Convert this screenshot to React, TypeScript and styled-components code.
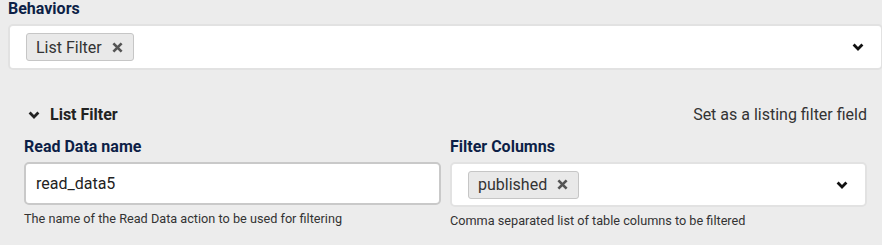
import React from 'react'
import styled, { createGlobalStyle } from 'styled-components'

const GlobalStyle = createGlobalStyle`
  html, body {
    margin: 0;
    padding: 0;
    background: #ececec;
    overflow: hidden;
  }
  body {
    font-family: Roboto, "Liberation Sans", Arial, sans-serif;
  }
`

const Page = styled.div`
  width: 891px;
  box-sizing: border-box;
  padding: 0 8px;
  margin-top: -1px;
`

const GroupLabel = styled.div`
  font-size: 16px;
  font-weight: 700;
  line-height: 19px;
  color: #0d1f47;
`

const SelectBox = styled.div<{ $mt?: number; $h: number }>`
  box-sizing: border-box;
  height: ${p => p.$h}px;
  margin-top: ${p => p.$mt ?? 0}px;
  background: #fff;
  border: 2px solid #e2e2e2;
  border-radius: 5px;
  display: flex;
  align-items: center;
  padding: 0 17px 0 16px;
`

const Tags = styled.div`
  flex: 1;
  display: flex;
  gap: 6px;
`

const Tag = styled.span`
  box-sizing: border-box;
  height: 28px;
  display: inline-flex;
  align-items: center;
  gap: 10px;
  padding: 0 10px 0 9px;
  background: #e9e9e9;
  border: 1px solid #c6c6c6;
  border-radius: 3px;
  font-size: 16px;
  color: #333;
`

const Section = styled.div`
  padding: 35px 16px 0 16px;
`

const SectionHead = styled.div`
  display: flex;
  justify-content: space-between;
  align-items: center;
  line-height: 19px;
  font-size: 16px;
`

const SectionTitle = styled.div`
  display: flex;
  align-items: center;
  gap: 10px;
  padding-left: 4px;
  font-weight: 700;
  color: #222;
`

const SectionNote = styled.div`
  color: #333;
`

const Columns = styled.div`
  display: grid;
  grid-template-columns: 1fr 1fr;
  column-gap: 9px;
  margin-top: 13px;
`

const Field = styled.div`
  display: flex;
  flex-direction: column;
`

const FieldLabel = styled(GroupLabel)`
  margin-bottom: 6px;
`

const TextInput = styled.div`
  box-sizing: border-box;
  height: 43px;
  background: #fff;
  border: 2px solid #c9c9c9;
  border-radius: 5px;
  display: flex;
  align-items: center;
  padding: 0 10px;
  font-size: 16px;
  color: #222;
`

const Help = styled.div`
  margin-top: 7px;
  font-size: 12.7px;
  line-height: 14px;
  color: #333;
`

const Chevron = ({ color = '#111' }: { color?: string }) => (
  <svg width="12" height="8" viewBox="0 0 12 8">
    <path d="M1.6 1.6 L6 6 L10.4 1.6" fill="none" stroke={color} strokeWidth="2.8" />
  </svg>
)

const Cross = () => (
  <svg width="11" height="11" viewBox="0 0 11 11">
    <path d="M1.4 1.4 L9.6 9.6 M9.6 1.4 L1.4 9.6" stroke="#555" strokeWidth="2.7" />
  </svg>
)

const App: React.FC = () => (
  <>
    <GlobalStyle />
    <Page>
      <GroupLabel>Behaviors</GroupLabel>
      <SelectBox $mt={6} $h={46}>
        <Tags>
          <Tag>
            List Filter <Cross />
          </Tag>
        </Tags>
        <Chevron />
      </SelectBox>
      <Section>
        <SectionHead>
          <SectionTitle>
            <Chevron color="#222" />
            List Filter
          </SectionTitle>
          <SectionNote>Set as a listing filter field</SectionNote>
        </SectionHead>
        <Columns>
          <Field>
            <FieldLabel>Read Data name</FieldLabel>
            <TextInput>read_data5</TextInput>
            <Help>The name of the Read Data action to be used for filtering</Help>
          </Field>
          <Field>
            <FieldLabel>Filter Columns</FieldLabel>
            <SelectBox $h={45}>
              <Tags>
                <Tag>
                  published <Cross />
                </Tag>
              </Tags>
              <Chevron />
            </SelectBox>
            <Help>Comma separated list of table columns to be filtered</Help>
          </Field>
        </Columns>
      </Section>
    </Page>
  </>
)

export default App
